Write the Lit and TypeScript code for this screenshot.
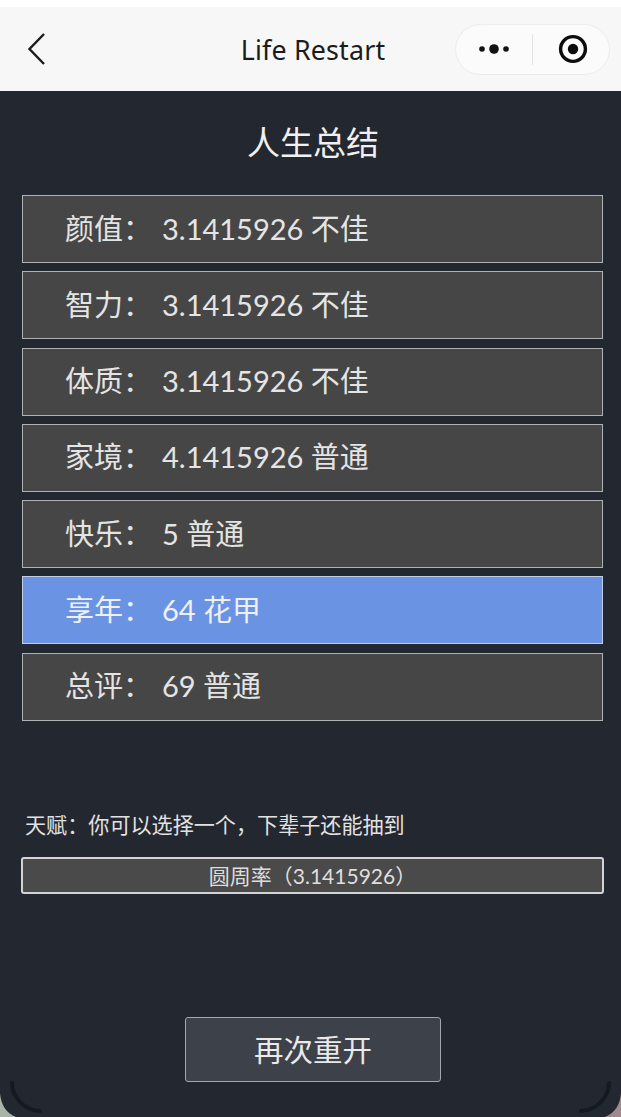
import { LitElement, html, css } from "lit";
import { customElement } from "lit/decorators.js";

const rows = [
  ["颜值", "3.1415926 不佳", false],
  ["智力", "3.1415926 不佳", false],
  ["体质", "3.1415926 不佳", false],
  ["家境", "4.1415926 普通", false],
  ["快乐", "5 普通", false],
  ["享年", "64 花甲", true],
  ["总评", "69 普通", false],
] as const;

@customElement("app-root")
export class AppRoot extends LitElement {
  static styles = css`
    :host { display: block; width: 621px; height: 1117px; overflow: hidden; background: #fff;
      font-family: "Lato", "Noto Sans CJK SC", sans-serif; }
    .page { position: relative; height: 1117px; display: flex; flex-direction: column; padding-top: 7px; box-sizing: border-box; }
    .nav { height: 84px; flex: none; background: #f7f7f7; display: grid; grid-template-columns: 1fr auto 1fr; align-items: center; padding: 0 11px 0 16px; }
    .back { display: block; margin-left: 11px; }
    .nav-title { font-size: 26.8px; color: #1b1b1b; font-family: "Noto Sans", sans-serif; letter-spacing: 0.2px; }
    .capsule { justify-self: end; width: 155px; height: 51px; box-sizing: border-box; border: 1px solid #ececec; border-radius: 26px; background: #fbfbfb; display: flex; align-items: center; }
    .cap-side { flex: 1; display: flex; align-items: center; justify-content: center; }
    .cap-side.more { flex: 0 0 76px; }
    .cap-side.target { padding-left: 3px; }
    .cap-sep { width: 1px; height: 31px; background: #e4e4e4; }
    .main { flex: 1; background: #23272f; color: #e6e6e6; display: flex; flex-direction: column; }
    .heading { text-align: center; font-size: 33px; line-height: 44px; margin-top: 29px; padding-left: 5px; color: #f0f0f0; }
    .rows { display: flex; flex-direction: column; gap: 8.25px; margin: 31px 18px 0 22px; }
    .row { height: 68px; box-sizing: border-box; border: 1px solid #b0b1b4; background: #464646; display: flex; align-items: center; padding: 0 0 5px 42px; font-size: 29px; color: #e4e4e4; }
    .row.hl { background: #6b93e4; border-color: #c2cee6; color: #eef1f6; }
    .label { width: 97px; flex: none; }
    .note { font-size: 21.1px; line-height: 28px; margin: 90.5px 0 0 25px; color: #e2e2e2; }
    .talent { margin: 18px 17px 0 21px; height: 37px; box-sizing: border-box; border: 2px solid #d4d4d4; border-radius: 3px; background: #4a4a4a; display: flex; align-items: center; justify-content: center; font-size: 21px; padding-bottom: 1px; color: #dedede; }
    .restart { align-self: center; margin: 123px 0 0 5px; width: 256px; height: 65px; box-sizing: border-box; border: 1px solid #a4a6ab; border-radius: 3px; background: #3d4149; display: flex; align-items: center; justify-content: center; font-size: 29.5px; padding-bottom: 3px; color: #eaeaea; }
    .corner { position: absolute; bottom: 0; width: 48px; height: 48px; }
    .corner.l { left: 0; }
    .corner.r { right: 0; }
  `;

  render() {
    return html`<div class="page">
      <div class="nav">
        <svg class="back" width="20" height="34" viewBox="0 0 20 34"><path d="M17 2 2.5 17 17 32" fill="none" stroke="#1a1a1a" stroke-width="2.4"/></svg>
        <div class="nav-title">Life Restart</div>
        <div class="capsule">
          <div class="cap-side more"><svg width="32" height="12" viewBox="0 0 32 12"><circle cx="4" cy="6" r="2.8" fill="#111"/><circle cx="16" cy="6" r="4.8" fill="#111"/><circle cx="28" cy="6" r="2.8" fill="#111"/></svg></div>
          <div class="cap-sep"></div>
          <div class="cap-side target"><svg width="30" height="30" viewBox="0 0 30 30"><circle cx="15" cy="15" r="12.4" fill="none" stroke="#0c0c0c" stroke-width="3.4"/><circle cx="15" cy="15" r="5.2" fill="#0c0c0c"/></svg></div>
        </div>
      </div>
      <div class="main">
        <div class="heading">人生总结</div>
        <div class="rows">
          ${rows.map(([k, v, hl]) => html`<div class="row ${hl ? "hl" : ""}"><span class="label">${k}：</span><span>${v}</span></div>`)}
        </div>
        <div class="note">天赋：你可以选择一个，下辈子还能抽到</div>
        <div class="talent">圆周率（3.1415926）</div>
        <div class="restart">再次重开</div>
      </div>
      <svg class="corner l" viewBox="0 0 48 48"><path d="M0 24C1 36 6 44 16 48H0Z" fill="#a9b3a8"/><path d="M12 14C12 27 23 41 40 42" fill="none" stroke="#151920" stroke-width="4" stroke-linecap="round"/></svg>
      <svg class="corner r" viewBox="0 0 48 48"><path d="M48 24C47 36 42 44 32 48H48Z" fill="#a08a90"/><path d="M36 14C36 27 25 41 8 42" fill="none" stroke="#151920" stroke-width="4" stroke-linecap="round"/></svg>
    </div>`;
  }
}
